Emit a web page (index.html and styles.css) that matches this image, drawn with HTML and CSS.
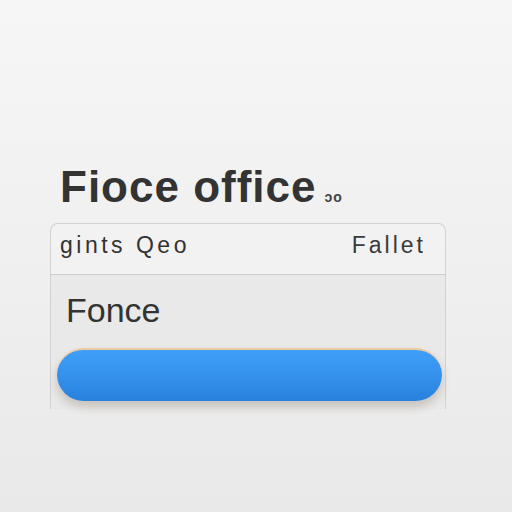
FILE: index.html
```html
<!DOCTYPE html>
<html>
<head>
<meta charset="utf-8">
<link rel="stylesheet" href="styles.css">
</head>
<body>
<div class="page">
  <h1 class="title">Fioce office<span class="tag">ɔo</span></h1>
  <div class="card">
    <div class="card-head">
      <span class="head-left">gints Qeo</span>
      <span class="head-right">Fallet</span>
    </div>
    <div class="card-body">
      <div class="field">Fonce</div>
      <div class="bar"></div>
    </div>
  </div>
</div>
</body>
</html>
```
FILE: styles.css
```css
html, body {
  margin: 0;
  height: 100%;
}
body {
  background: linear-gradient(#f6f6f6 0%, #f1f1f1 40%, #e9e9e9 100%);
  font-family: "Liberation Sans", Arial, sans-serif;
  color: #333;
}
.page {
  padding: 162px 0 0 50px;
  width: 396px;
}
.title {
  margin: 0 0 11px 10px;
  font-size: 44px;
  line-height: 50px;
  font-weight: bold;
  letter-spacing: 1px;
  color: #333;
}
.tag {
  font-size: 14px;
  line-height: 1;
  letter-spacing: 1px;
  margin-left: 8px;
  color: #444;
}
.card {
  border: 1px solid #d2d2d2;
  border-bottom: none;
  border-radius: 8px 8px 0 0;
  background: #e9e9e9;
}
.card-head {
  height: 51px;
  display: flex;
  justify-content: space-between;
  align-items: center;
  padding: 0 19px 7px 9px;
  box-sizing: border-box;
  background: #f2f2f2;
  border-bottom: 1px solid #cdcdcd;
  border-radius: 8px 8px 0 0;
}
.head-left {
  font-size: 23px;
  letter-spacing: 3.5px;
  color: #333;
}
.head-right {
  font-size: 23px;
  letter-spacing: 3px;
  color: #3a3a3a;
}
.card-body {
  padding: 15px 3px 8px 6px;
}
.field {
  padding-left: 9px;
  font-size: 34px;
  line-height: 40px;
  color: #333;
}
.bar {
  margin-top: 18px;
  height: 53px;
  border-radius: 27px;
  background: linear-gradient(#3f9ff6 0%, #3593ee 45%, #2a80dd 100%);
  border-top: 2px solid #ecc9a0;
  box-sizing: border-box;
  box-shadow: 0 6px 10px rgba(80, 60, 30, 0.22);
}
```
